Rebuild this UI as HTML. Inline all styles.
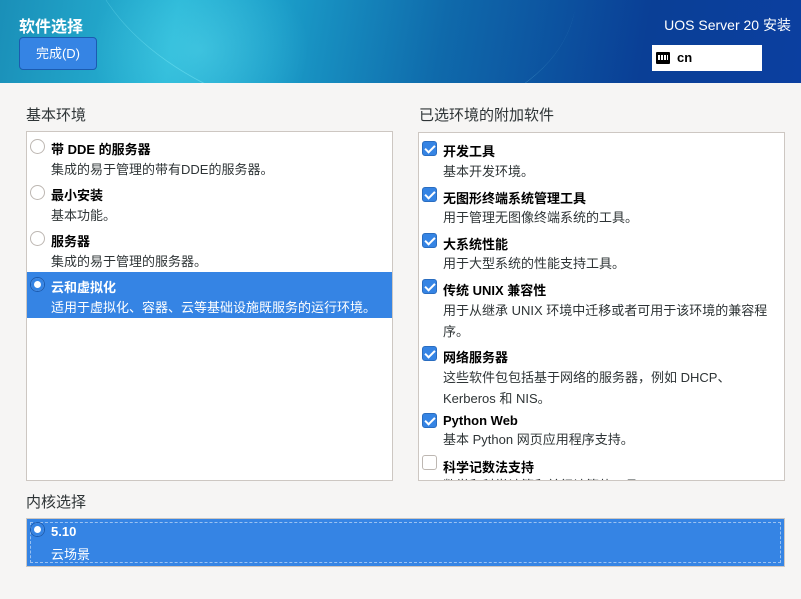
<!DOCTYPE html>
<html><head><meta charset="utf-8"><style>
*{margin:0;padding:0;box-sizing:border-box}
body{width:801px;height:599px;overflow:hidden;background:#f6f5f4;font-family:"Liberation Sans","Noto Sans CJK SC",sans-serif;font-size:13px;color:#2e3436;position:relative}
.hdr{position:absolute;left:0;top:0;width:801px;height:83px;background:linear-gradient(100deg,#1a8fb8 0%,#27b5d6 22%,#1a9cc8 35%,#0f6aab 55%,#0a3f96 80%,#0b3fa0 100%);overflow:hidden}
.hdr .glow{position:absolute;left:90px;top:-40px;width:220px;height:180px;border-radius:50%;background:radial-gradient(ellipse,rgba(120,240,250,.3),rgba(120,240,250,0) 70%)}
.hdr .arc{position:absolute;left:80px;top:-200px;width:500px;height:320px;border-radius:50%;border-bottom:1px solid rgba(150,245,255,.35);transform:rotate(12deg)}
.title{position:absolute;left:19px;top:13px;color:#fff;font-weight:bold;font-size:16px}
.btn{position:absolute;left:19px;top:37px;width:78px;height:33px;border-radius:4px;background:#3584e4;border:1px solid #1b5bb0;color:#fff;text-align:center;line-height:31px;font-size:13px}
.uos{position:absolute;right:10px;top:15px;color:#fff;font-size:14px}
.kb{position:absolute;left:652px;top:45px;width:110px;height:26px;background:#fff;font-weight:bold;font-size:13px;line-height:26px;padding-left:25px;color:#000}
.kb i{position:absolute;left:4px;top:7px;width:14px;height:12px;background:#000;border-radius:1px}
.kb i:after{content:"";position:absolute;left:2px;top:3px;width:10px;height:5px;background:repeating-linear-gradient(90deg,#fff 0 2px,#000 2px 3px)}
.lbl{position:absolute;font-size:15px;color:#2e3436}
.box{position:absolute;background:#fff;border:1px solid #cdc7c2}
.it{position:absolute;left:0;right:0;height:46px}
.it b{position:absolute;left:24px;top:5px;font-size:13px;color:#000}
.it span{position:absolute;left:24px;top:25px}
.sel{background:#3584e4}
.sel b,.sel span{color:#fff}
.rd{position:absolute;left:3px;top:5px;width:15px;height:15px;border-radius:50%;border:1px solid #bdb7b2;background:#fff}
.sel .rd{border:1px solid #1b5bb0;background:#fff;box-shadow:inset 0 0 0 4px #3584e4}
.sel .rd:after{content:"";position:absolute;left:3px;top:3px;width:7px;height:7px;border-radius:50%;background:#fff}
.r{position:absolute;left:0;right:0}
.r b{position:absolute;left:24px;font-size:13px;color:#000}
.r span{position:absolute;left:24px;line-height:21px}
.cb{position:absolute;left:3px;width:15px;height:15px;border-radius:3px;background:#3584e4;border:1px solid #2a6dc0}
.cb:after{content:"";position:absolute;left:4px;top:1px;width:4px;height:8px;border:solid #fff;border-width:0 2px 2px 0;transform:rotate(45deg)}
.cb.off{background:#fff;border-color:#bdb7b2}.cb.off:after{display:none}
</style></head><body>
<div class="hdr"><div class="glow"></div><div class="arc"></div>
<div class="title">软件选择</div>
<div class="btn">完成(D)</div>
<div class="uos">UOS Server 20 安装</div>
<div class="kb"><i></i>cn</div>
</div>
<div class="lbl" style="left:26px;top:104px">基本环境</div>
<div class="lbl" style="left:419px;top:104px">已选环境的附加软件</div>
<div class="box" style="left:26px;top:131px;width:367px;height:350px">
<div class="it" style="top:2px"><div class="rd"></div><b>带 DDE 的服务器</b><span>集成的易于管理的带有DDE的服务器。</span></div>
<div class="it" style="top:48px"><div class="rd"></div><b>最小安装</b><span>基本功能。</span></div>
<div class="it" style="top:94px"><div class="rd"></div><b>服务器</b><span>集成的易于管理的服务器。</span></div>
<div class="it sel" style="top:140px"><div class="rd"></div><b>云和虚拟化</b><span>适用于虚拟化、容器、云等基础设施既服务的运行环境。</span></div>
</div>
<div class="box" style="left:418px;top:132px;width:367px;height:349px;overflow:hidden">
<div class="r"><div class="cb" style="top:8px"></div><b style="top:8px">开发工具</b><span style="top:28px">基本开发环境。</span></div>
<div class="r"><div class="cb" style="top:54px"></div><b style="top:55px">无图形终端系统管理工具</b><span style="top:74px">用于管理无图像终端系统的工具。</span></div>
<div class="r"><div class="cb" style="top:100px"></div><b style="top:101px">大系统性能</b><span style="top:120px">用于大型系统的性能支持工具。</span></div>
<div class="r"><div class="cb" style="top:146px"></div><b style="top:147px">传统 UNIX 兼容性</b><span style="top:167px">用于从继承 UNIX 环境中迁移或者可用于该环境的兼容程<br>序。</span></div>
<div class="r"><div class="cb" style="top:213px"></div><b style="top:214px">网络服务器</b><span style="top:234px">这些软件包包括基于网络的服务器，例如 DHCP、<br>Kerberos 和 NIS。</span></div>
<div class="r"><div class="cb" style="top:280px"></div><b style="top:280px">Python Web</b><span style="top:296px">基本 Python 网页应用程序支持。</span></div>
<div class="r"><div class="cb off" style="top:322px"></div><b style="top:324px">科学记数法支持</b><span style="top:342px">数学和科学计算和并行计算的工具。</span></div>
</div>
<div class="lbl" style="left:26px;top:491px">内核选择</div>
<div class="box" style="left:26px;top:518px;width:759px;height:49px;background:#3584e4;border-color:#cdc7c2">
<div style="position:absolute;inset:3px;border:1px dashed rgba(255,255,255,.5)"></div>
<div class="it sel" style="top:0;background:none"><div class="rd" style="top:3px"></div><b style="top:5px">5.10</b><span style="top:25px">云场景</span></div>
</div>
</body></html>
